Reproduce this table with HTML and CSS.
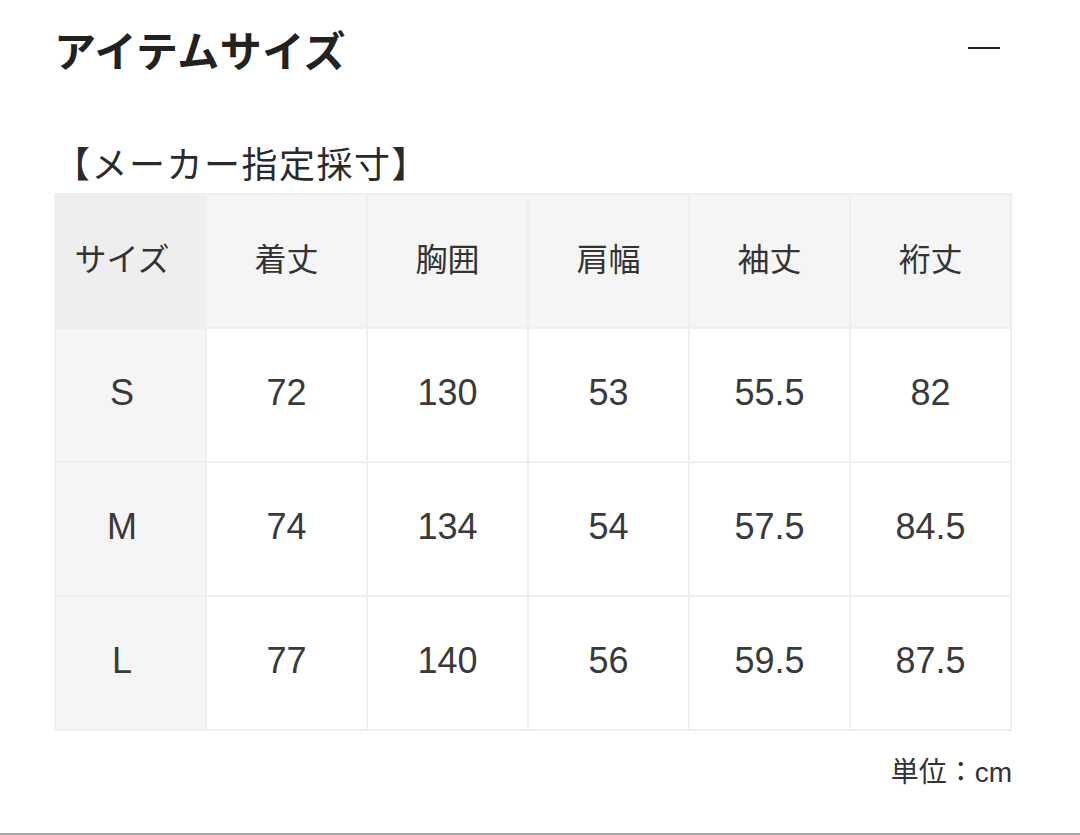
FILE: index.html
```html
<!DOCTYPE html>
<html lang="ja">
<head>
<meta charset="utf-8">
<link rel="stylesheet" href="styles.css">
</head>
<body>
<div class="page">
  <div class="head">
    <h1 class="title">アイテムサイズ</h1>
    <span class="minus"></span>
  </div>
  <div class="sub">【メーカー指定採寸】</div>
  <div class="table">
    <div class="c hd first">サイズ</div>
    <div class="c hd">着丈</div>
    <div class="c hd">胸囲</div>
    <div class="c hd">肩幅</div>
    <div class="c hd">袖丈</div>
    <div class="c hd">裄丈</div>

    <div class="c lab">S</div>
    <div class="c">72</div>
    <div class="c">130</div>
    <div class="c">53</div>
    <div class="c">55.5</div>
    <div class="c">82</div>

    <div class="c lab">M</div>
    <div class="c">74</div>
    <div class="c">134</div>
    <div class="c">54</div>
    <div class="c">57.5</div>
    <div class="c">84.5</div>

    <div class="c lab">L</div>
    <div class="c">77</div>
    <div class="c">140</div>
    <div class="c">56</div>
    <div class="c">59.5</div>
    <div class="c">87.5</div>
  </div>
  <div class="unit">単位：cm</div>
</div>
</body>
</html>
```
FILE: styles.css
```css
html, body {
  margin: 0;
  padding: 0;
  background: #ffffff;
}
body {
  font-family: "Liberation Sans", "Noto Sans CJK JP", sans-serif;
  color: #333333;
  width: 1080px;
  height: 835px;
  overflow: hidden;
  box-sizing: border-box;
  border-bottom: 2px solid #a8a8a8;
}
.page {
  padding: 0 68px 0 54px;
}
.head {
  display: flex;
  align-items: center;
  justify-content: space-between;
  height: 96px;
  padding-right: 12px;
}
.title {
  margin: 0;
  font-family: "Noto Sans CJK JP", sans-serif;
  font-weight: 700;
  font-size: 42px;
  color: #222222;
  letter-spacing: 0.5px;
}
.minus {
  display: block;
  width: 32px;
  height: 2px;
  background: #222222;
}
.sub {
  font-family: "Noto Sans CJK JP", sans-serif;
  font-size: 36px;
  letter-spacing: 1.5px;
  color: #2a2a2a;
  margin-top: 38px;
  line-height: 56px;
  margin-left: 0;
}
.table {
  display: grid;
  grid-template-columns: 149px repeat(5, 159px);
  grid-auto-rows: 132px;
  gap: 2px;
  padding: 2px;
  background: #efefef;
  width: max-content;
  margin-top: 3px;
}
.c {
  background: #ffffff;
  display: flex;
  align-items: center;
  justify-content: center;
  font-size: 36px;
  color: #3a3a3a;
  padding-bottom: 4px;
  box-sizing: border-box;
}
.hd {
  background: #f5f5f5;
  font-family: "Noto Sans CJK JP", sans-serif;
  font-size: 32px;
  color: #333333;
  padding-bottom: 8px;
}
.hd.first {
  background: #eeeeee;
}
.first, .lab {
  padding-right: 17px;
}
.lab {
  background: #f5f5f5;
}
.unit {
  text-align: right;
  font-family: "Liberation Sans", "Noto Sans CJK JP", sans-serif;
  font-size: 28px;
  color: #333333;
  margin-top: 19px;
}
```
